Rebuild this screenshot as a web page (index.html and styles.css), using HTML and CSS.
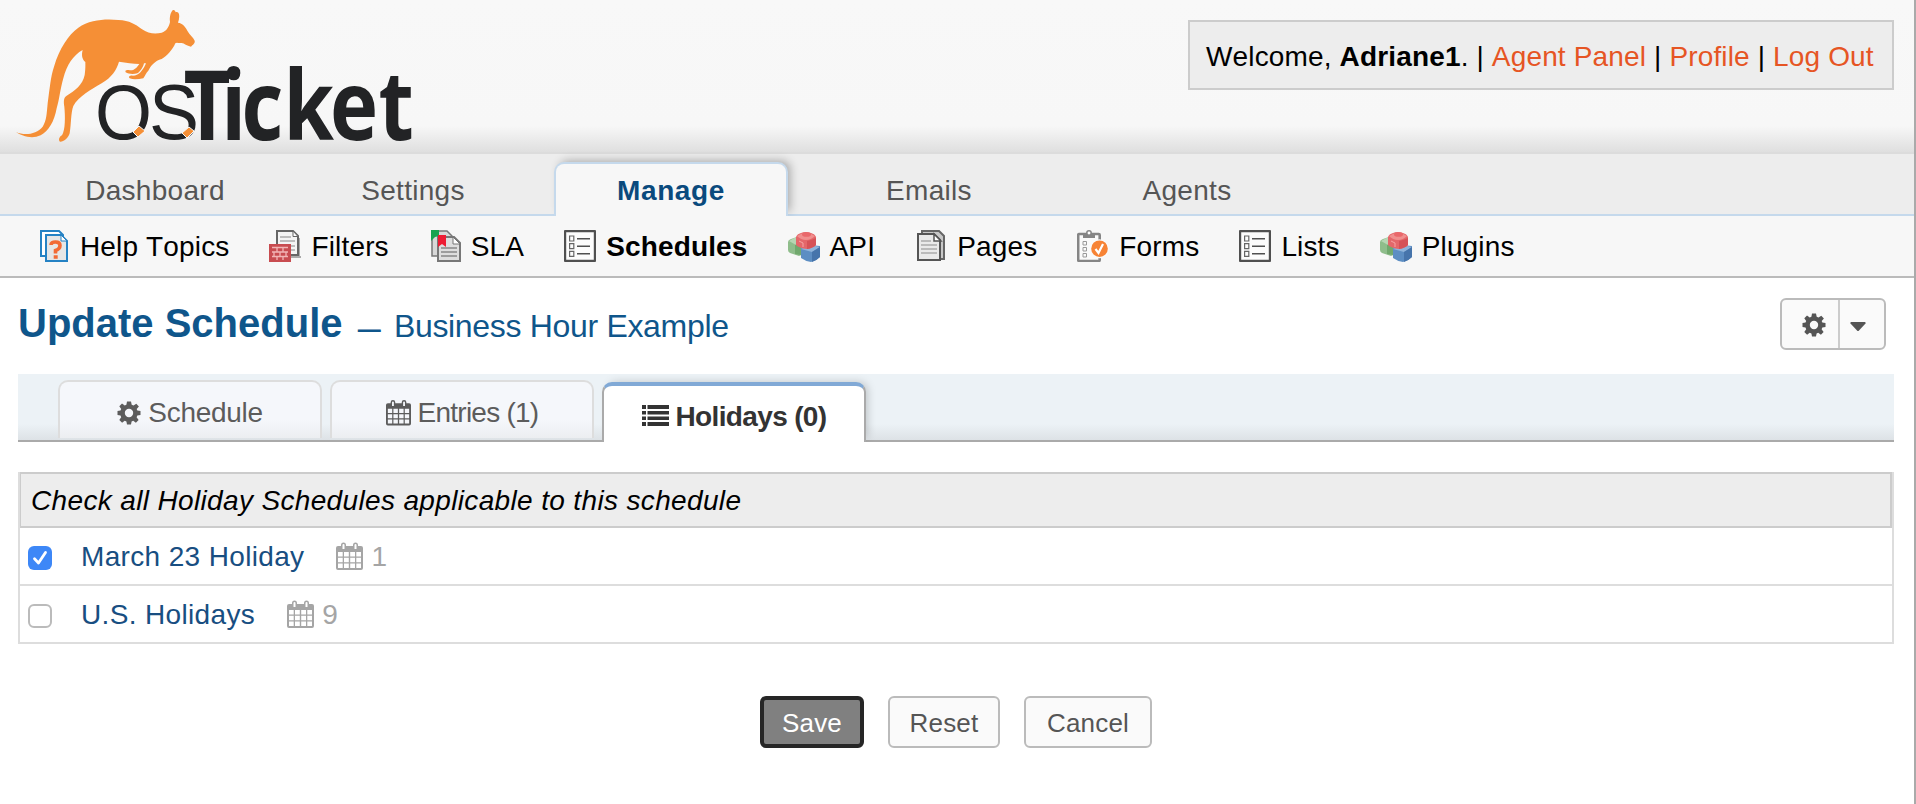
FILE: index.html
```html
<!DOCTYPE html>
<html lang="en">
<head>
<meta charset="utf-8">
<title>osTicket :: Update Schedule</title>
<link rel="stylesheet" href="styles.css">
</head>
<body>
<svg class="defs" aria-hidden="true">
  <defs>
    <symbol id="gear" viewBox="0 0 24 24">
      <path fill="currentColor" fill-rule="evenodd" d="M10 .5h4l.7 3.3 1.800.7L19.300 2.700 21.900 5.400 19.700 7.900l.6 1.700 3.200.5v3.900l-3.200.6-.7 1.700 2 2.700-2.700 2.700-2.700-1.900-1.600.7-.6 3H10l-.6-3-1.700-.7-2.600 1.900-2.800-2.700 1.900-2.700-.7-1.700L.5 14v-3.900l3-.5.7-1.700L2.300 5.300 5 2.600l2.700 1.900 1.700-.7zM12 7.800a4.200 4.200 0 1 0 0 8.400 4.200 4.200 0 0 0 0-8.400z"/>
    </symbol>
    <symbol id="calendar" viewBox="0 0 27 28">
      <path fill="currentColor" fill-rule="evenodd" d="M2 4h3V3a2.500 2.500 0 0 1 5 0v1h7V3a2.500 2.500 0 0 1 5 0v1h3a2 2 0 0 1 2 2v20a2 2 0 0 1-2 2H2a2 2 0 0 1-2-2V6a2 2 0 0 1 2-2zM6.500 3v4h2V3a1 1 0 0 0-2 0zM18.500 3v4h2V3a1 1 0 0 0-2 0zM2 10v4.500h4.700V10zM8 10v4.500h4.800V10zM14.200 10v4.500H19V10zM20.300 10v4.500H25V10zM2 15.800v4.400h4.700v-4.400zM8 15.800v4.400h4.800v-4.400zM14.200 15.800v4.400H19v-4.400zM20.300 15.800v4.400H25v-4.400zM2 21.500V26h4.700v-4.500zM8 21.500V26h4.800v-4.500zM14.200 21.500V26H19v-4.500zM20.300 21.500V26H25v-4.500z"/>
    </symbol>
    <symbol id="list" viewBox="0 0 27 21">
      <path fill="currentColor" d="M0 0h4v4H0zM5.500 0H27v4H5.500zM0 6h4v3.500H0zM5.500 6H27v3.500H5.500zM0 11.500h4V15H0zM5.500 11.500H27V15H5.500zM0 17h4v4H0zM5.500 17H27v4H5.500z"/>
    </symbol>
    <symbol id="form-list" viewBox="0 0 32 32">
      <rect x="1" y="1" width="30" height="30" rx="1" fill="#fcfcfc" stroke="#505050" stroke-width="2.400"/>
      <path fill="none" stroke="#666" stroke-width="1.200" d="M5.600 6h4.200v5H5.600zM5.600 13.700h4.200v5H5.600zM5.600 21.300h4.200v5H5.600z"/>
      <path stroke="#505050" stroke-width="1.600" d="M13 8.700h13M13 16.200h13M13 23.700h13"/>
    </symbol>
    <symbol id="blocks" viewBox="0 0 32 32">
      <path fill="#8fbd8b" d="M0 12q0-2 3-3l6-2 7 4v13l-5 2-9-3q-2-1-2-3z"/>
      <path fill="#b7d6b3" d="M1 11l7-4 6 4-6 4z"/>
      <path fill="#71a86d" d="M7 15l6-2v12l-6-1z"/>
      <path fill="#5d8ec3" d="M13 18l9-3 10 1v11q-4 4-9 5-6-1-10-4z"/>
      <path fill="#8fb3da" d="M13 19l9-4 10 2-8 5z"/>
      <path fill="#4674ab" d="M24 22l8-5v10q-4 4-8 5z"/>
      <path fill="#e4676a" d="M8 7q1-3 5-4 2-1 5-1t5 1q4 1 5 4v8q-3 3-9 4-8-1-11-4z"/>
      <path fill="#f08f8e" d="M9 6q4-3 9-3t9 3q-4 4-9 4t-9-4z"/>
      <ellipse cx="18.500" cy="4.500" rx="4.500" ry="2.300" fill="#e9686b"/>
      <path fill="#d65257" d="M19 11q5-1 9-3v7q-3 3-9 4z"/>
      <path fill="none" stroke="#f6a4a2" d="M11 11l4 2v4"/>
    </symbol>
  </defs>
</svg>

<div class="window">
  <header class="header">
    <svg class="logo" viewBox="0 0 440 152" role="img" aria-label="osTicket">
      <path transform="scale(.33333)" fill="#f58f36" d="M48 396C75 408 110 402 128 380C140 362 140 340 143 310C150 260 152 230 162 200C178 145 205 105 235 83C270 58 320 56 355 60C390 62 405 72 425 87C445 101 465 103 485 98C500 94 507 80 510 66C508 50 512 36 519 30C524 29 526 34 527 37C534 32 540 42 537 55C537 62 534 66 534 68C548 70 556 80 562 92C568 104 580 112 584 122C586 130 578 134 573 140C560 138 553 130 545 129C535 130 530 126 526 130C518 150 500 168 485 177C465 182 452 198 445 212C438 218 435 228 430 235C415 238 400 240 389 235C384 230 390 226 398 227C408 227 415 222 420 218C430 208 436 196 438 190L432 190C430 200 422 214 412 220C400 223 385 222 377 217C374 210 380 208 390 211C402 212 410 204 418 192C400 191 378 188 357 185C350 210 335 232 305 250C275 268 235 290 220 318C212 340 214 370 209 400C205 415 190 426 180 425C174 420 178 410 186 406C196 390 196 350 193 320C190 300 192 292 200 287C225 272 248 255 254 225C257 205 256 190 256 186C246 178 244 165 248 150C220 165 200 195 190 235C180 270 178 300 170 325C163 365 145 395 122 406C95 418 65 408 48 396Z"/>
      <text class="logo-light" x="95" y="139" textLength="57" lengthAdjust="spacingAndGlyphs">O</text>
      <text class="logo-light" x="149" y="139" textLength="50" lengthAdjust="spacingAndGlyphs">S</text>
      <text class="logo-bold" transform="scale(.84 1)" x="218.500 263.300 287.400 337.500 392.900 450.600" y="140">Ticket</text>
      <path fill="#f58f36" stroke="#f8f8f8" d="M133 132l6-6 6 5-7 6zM182 133l7-6 5 4-7 7z"/>
    </svg>
    <div class="user-box">Welcome, <strong>Adriane1</strong>. | <a>Agent Panel</a> | <a>Profile</a> | <a>Log Out</a></div>
  </header>

  <nav class="nav">
    <a class="nav-tab">Dashboard</a>
    <a class="nav-tab">Settings</a>
    <a class="nav-tab nav-tab-active">Manage</a>
    <a class="nav-tab">Emails</a>
    <a class="nav-tab">Agents</a>
  </nav>

  <nav class="subnav">
    <a class="subnav-item">
      <svg class="icon" viewBox="0 0 32 32"><path fill="#fff" stroke="#2582c4" stroke-width="2" d="M3 1h18l4 4v21H3z"/><path fill="#e6e6e6" stroke="#2582c4" stroke-width="2" d="M8 5h15l6 6v20H8z"/><path fill="#fff" stroke="#2582c4" d="M23 5v6h6z"/><path fill="none" stroke="#f26a35" stroke-width="3.600" d="M13 15q0-3 4.500-3t4.500 3.500-4.500 5v3M15.700 27h4"/></svg>
      <span>Help Topics</span></a>
    <a class="subnav-item">
      <svg class="icon" viewBox="0 0 32 32"><path fill="#aaa" d="M9 26h23v2H9zM29 8h2v18h-2z"/><path fill="#f4f4f4" stroke="#666" stroke-width="2" d="M8 1h16l5 5v19H8z"/><path fill="#fff" stroke="#666" d="M24 1v5.500h5z"/><path stroke="#aaa" stroke-width="1.500" d="M11 7h11M11 11h15M20 16h6M22 20h4"/><path fill="#c84c50" d="M0 14h22v18H0z"/><path fill="none" stroke="#f2b5b5" stroke-width="1.300" d="M3 17.500h16M3 22h16M3 26.500h16M8 17.500V22M14 17.500V22M5 22v4.500M11 22v4.500M17 22v4.500M8 26.500V30M14 26.500V30"/></svg>
      <span>Filters</span></a>
    <a class="subnav-item">
      <svg class="icon" viewBox="0 0 32 32"><path fill="#d8d8d8" stroke="#777" stroke-width="1.500" d="M3 1h15l5 5v20H3z"/><path fill="#dedede" stroke="#777" stroke-width="2" d="M9 7h16l6 6v18H9z"/><path fill="#fff" stroke="#777" d="M24 7v7h7z"/><path stroke="#888" stroke-width="1.700" d="M12 18h16M12 22h16M12 26h16"/><path fill="#19a350" d="M2 0h8v6l-4 1-4 4z"/><path fill="#ed1c33" d="M9 5h8v12l-4-3-4 3z"/></svg>
      <span>SLA</span></a>
    <a class="subnav-item subnav-item-active">
      <svg class="icon"><use href="#form-list"/></svg>
      <span>Schedules</span></a>
    <a class="subnav-item">
      <svg class="icon"><use href="#blocks"/></svg>
      <span>API</span></a>
    <a class="subnav-item">
      <svg class="icon" viewBox="0 0 32 32"><path fill="#c8c8c8" stroke="#666" stroke-width="2" d="M7 1h17l5 5v23H7z"/><path fill="#e9e9e9" stroke="#555" stroke-width="2" d="M3 4h16l6 6v20H3z"/><path fill="#fff" stroke="#555" stroke-width="1.500" d="M19 4v7h7z"/><path stroke="#aaa" stroke-width="1.500" d="M6 11h10M6 15h16M6 19h16M6 23h16"/></svg>
      <span>Pages</span></a>
    <a class="subnav-item">
      <svg class="icon" viewBox="0 0 32 32"><rect x="1.200" y="4" width="21.500" height="27" rx="1" fill="#fafafa" stroke="#858585" stroke-width="2.600"/><path fill="#858585" d="M6 3h12v5H6z"/><circle cx="12" cy="3" r="2.200" fill="#fff" stroke="#858585" stroke-width="1.500"/><path fill="none" stroke="#999" d="M6 11.500h3.500V15H6zM6 17.500h3.500V21H6zM6 23.500h3.500V27H6z"/><circle cx="22.500" cy="18.700" r="9.500" fill="#fafafa"/><circle cx="22.500" cy="18.700" r="8.300" fill="#f78335"/><path fill="none" stroke="#fff" stroke-width="2.200" d="M18.500 19l3 4 4.500-9"/></svg>
      <span>Forms</span></a>
    <a class="subnav-item">
      <svg class="icon"><use href="#form-list"/></svg>
      <span>Lists</span></a>
    <a class="subnav-item">
      <svg class="icon"><use href="#blocks"/></svg>
      <span>Plugins</span></a>
  </nav>

  <main class="content">
    <div class="title-row">
      <h2 class="title">Update Schedule <small class="subtitle"><span class="dash">—</span> Business Hour Example</small></h2>
      <div class="split-button">
        <span class="split-main"><svg class="icon-gear"><use href="#gear"/></svg></span>
        <span class="split-caret"><svg class="icon-caret" viewBox="0 0 16 9"><path fill="#555" d="M1 0h14q1 .5.500 1.500L9 8.500q-1 1-2 0L.5 1.500Q0 .5 1 0z"/></svg></span>
      </div>
    </div>

    <div class="tabs">
      <a class="tab"><svg class="icon-gear"><use href="#gear"/></svg><span class="schedule-text">Schedule</span></a>
      <a class="tab"><svg class="icon-calendar-tab"><use href="#calendar"/></svg><span class="entries-text">Entries (1)</span></a>
      <a class="tab tab-active"><svg class="icon-list"><use href="#list"/></svg><span class="holidays-text">Holidays (0)</span></a>
    </div>

    <div class="table">
      <div class="table-head">Check all Holiday Schedules applicable to this schedule</div>
      <div class="table-row">
        <span class="checkbox checkbox-on"><svg viewBox="0 0 24 24"><path fill="none" stroke="#fff" stroke-width="2.800" stroke-linecap="round" stroke-linejoin="round" d="M6.500 12.800l4 4.200 7-10.500"/></svg></span>
        <a class="row-link">March 23 Holiday</a>
        <svg class="icon-calendar"><use href="#calendar"/></svg><span class="count">1</span>
      </div>
      <div class="table-row">
        <span class="checkbox"></span>
        <a class="row-link">U.S. Holidays</a>
        <svg class="icon-calendar"><use href="#calendar"/></svg><span class="count">9</span>
      </div>
    </div>

    <div class="actions">
      <button class="button button-save">Save</button>
      <button class="button button-reset">Reset</button>
      <button class="button button-cancel">Cancel</button>
    </div>
  </main>
</div>
</body>
</html>
```
FILE: styles.css
```css
* { box-sizing: border-box; }

body {
  margin: 0;
  background: #fff;
  color: #000;
  font: 28px/32px "Liberation Sans", Arial, sans-serif;
  font-kerning: none;
  letter-spacing: .15px;
}

.defs { position: absolute; width: 0; height: 0; }

.window {
  height: 804px;
  border-right: 2px solid #aaa;
  overflow: hidden;
}

.header {
  display: flex;
  justify-content: space-between;
  align-items: flex-start;
  height: 154px;
  padding-right: 20px;
  border-bottom: 2px solid #dcdcdc;
  background: linear-gradient(#f8f8f8 0, #f7f7f7 126px, #dfdfdf 152px);
}

.logo { display: block; width: 440px; height: 152px; overflow: visible; letter-spacing: 0; }
.logo-light { font: 400 78px "Liberation Sans", sans-serif; fill: #222325; }
.logo-bold { font: 700 97px "Open Sans", sans-serif; fill: #222325; }

.user-box {
  width: 706px;
  height: 70px;
  margin-top: 20px;
  padding: 19px 0 0 16px;
  border: 2px solid #ccc;
  background: #ededed;
  white-space: nowrap;
}
.user-box a { color: #e65524; }

.nav {
  display: flex;
  gap: 24px;
  height: 62px;
  padding: 8px 38px 0;
  border-bottom: 2px solid #c5d9ec;
  background: #ededed;
}
.nav-tab {
  width: 234px;
  height: 54px;
  padding-top: 13px;
  color: #555;
  text-align: center;
  letter-spacing: .3px;
}
.nav-tab-active {
  padding-top: 11px;
  border: 2px solid #c5d9ec;
  border-bottom: 0;
  border-radius: 10px 10px 0 0;
  background: #f7f7f7;
  box-shadow: 4px -3px 10px -2px rgba(0, 0, 0, .3);
  color: #0a4a7d;
  font-weight: bold;
  letter-spacing: .6px;
  clip-path: inset(-20px -20px 0 -20px);
}

.subnav {
  display: flex;
  gap: 40px;
  height: 62px;
  padding: 14px 38px 0;
  border-bottom: 2px solid #bbb;
  background: #f7f7f7;
}
.subnav-item { display: flex; gap: 10px; white-space: nowrap; }
.subnav-item span { margin-top: 1px; }
.subnav-item-active { font-weight: bold; }
.icon { width: 32px; height: 32px; }

.content { padding: 20px 20px 0 18px; }

.title-row {
  display: flex;
  justify-content: space-between;
  height: 76px;
  padding-right: 8px;
}
.title {
  margin: 0;
  color: #0f568b;
  font-size: 40px;
  line-height: 50px;
  letter-spacing: 0;
}
.subtitle { font-size: 32px; font-weight: normal; letter-spacing: -.32px; }
.dash { display: inline-block; margin: 0 5px 0 4px; font-size: 23px; font-weight: bold; }

.split-button {
  display: flex;
  width: 106px;
  height: 52px;
  border: 2px solid #bbb;
  border-radius: 6px;
  background: #fafafa;
  color: #555;
}
.split-main { width: 58px; padding: 13px 0 0 20px; border-right: 2px solid #ccc; line-height: 0; }
.split-caret { padding: 22px 0 0 10px; line-height: 0; }
.icon-gear { width: 24px; height: 24px; }
.icon-caret { width: 16px; height: 9px; }

.tabs {
  display: flex;
  align-items: flex-start;
  gap: 8px;
  height: 68px;
  padding: 6px 40px 0;
  border-bottom: 2px solid #aaa;
  background: linear-gradient(#ecf2f6 50px, #dde2e6 66px);
}
.tab {
  display: flex;
  gap: 7px;
  justify-content: center;
  width: 264px;
  height: 58px;
  padding-top: 14px;
  border: 2px solid #ddd;
  border-bottom: 0;
  border-radius: 10px 10px 0 0;
  background: linear-gradient(#f5f7fb 38px, #eceef1);
  color: #5c5c5c;
  white-space: nowrap;
}
.tab span { margin-top: 1px; }
.tab .icon-gear { margin-top: 5px; }
.icon-calendar-tab { width: 25px; height: 27px; margin-top: 3px; }
.tab-active {
  height: 60px;
  margin-top: 2px;
  padding-top: 14px;
  border-color: #81a9d6 #aaa #aaa;
  border-top-width: 4px;
  background: #fff;
  box-shadow: 4px -2px 10px -3px rgba(0, 0, 0, .22);
  color: #333;
  font-weight: bold;
  clip-path: inset(-10px -20px 0 -20px);
}
.icon-list { width: 27px; height: 21px; margin-top: 5px; }
.schedule-text { letter-spacing: -.3px; }
.entries-text { letter-spacing: -.75px; }
.holidays-text { letter-spacing: -.65px; }

.table {
  margin-top: 30px;
  border: 2px solid #ddd;
  border-top: 0;
  border-bottom: 0;
  letter-spacing: .35px;
}
.table-head {
  height: 56px;
  padding: 11px 10px 0;
  border: 2px solid #ccc;
  border-left-width: 1px;
  background: #ededed;
  font-style: italic;
}
.table-row {
  display: flex;
  height: 58px;
  padding: 12px 8px 0;
  border-bottom: 2px solid #ddd;
}
.checkbox {
  width: 24px;
  height: 24px;
  margin: 6px 29px 0 0;
  border: 2px solid #bbb;
  border-radius: 6px;
  background: #fff;
}
.checkbox-on { border: 0; background: #3d87f7; line-height: 0; }
.row-link { margin-top: 1px; color: #184e81; }
.icon-calendar { width: 27px; height: 28px; margin: 2px 8px 0 32px; color: #a5a5a5; }
.count { margin-top: 1px; color: #a5a5a5; }

.actions { display: flex; gap: 24px; margin: 52px 0 0 742px; }
.button {
  height: 52px;
  padding: 1px 0 0;
  border: 2px solid #bbb;
  border-radius: 6px;
  background: #fafafa;
  color: #555;
  font: 26px/30px "Liberation Sans", Arial, sans-serif;
  letter-spacing: .2px;
}
.button-save { width: 104px; border: 4px solid #262626; background: #808080; color: #fff; }
.button-reset { width: 112px; }
.button-cancel { width: 128px; }
```
